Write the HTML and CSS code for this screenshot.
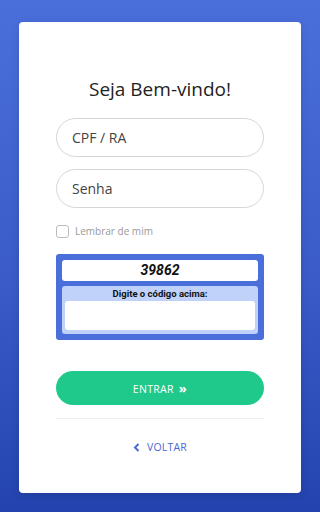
FILE: index.html
```html
<!DOCTYPE html>
<html lang="pt-BR">
<head>
    <meta charset="UTF-8">
    <meta name="viewport" content="width=device-width, initial-scale=1.0">
    <title>Login</title>
    <link rel="stylesheet" href="styles.css">
</head>
<body>
    <div class="card">
        <h1>Seja Bem-vindo!</h1>

        <form class="login">
            <input type="text" class="field" placeholder="CPF / RA">
            <input type="password" class="field" placeholder="Senha">

            <label class="remember">
                <span class="box"></span>
                Lembrar de mim
            </label>

            <div class="captcha">
                <div class="code">39862</div>
                <div class="answer">
                    <span>Digite o código acima:</span>
                    <input type="text">
                </div>
            </div>

            <button type="button" class="enter">ENTRAR <b>&raquo;</b></button>
        </form>

        <hr>

        <a class="back" href="#">
            <svg width="7" height="9" viewBox="0 0 7 9"><path d="M5.5 1 L2 4.5 L5.5 8" fill="none" stroke="#4a68d6" stroke-width="2"/></svg>
            VOLTAR
        </a>
    </div>
</body>
</html>
```

FILE: styles.css
```css
* {
    margin: 0;
    padding: 0;
    box-sizing: border-box;
}

body {
    font-family: "Open Sans", "Noto Sans", sans-serif;
    background: linear-gradient(180deg, #4a6fdb 0%, #3a5bc8 55%, #2443ae 100%);
    min-height: 512px;
    padding: 22px 19px 19px;
}

.card {
    background-color: #fff;
    border-radius: 4px;
    height: 471px;
    padding: 54px 37px 0;
    box-shadow: 0 2px 8px rgba(0, 0, 0, 0.12);
}

h1 {
    font-size: 19px;
    font-weight: 400;
    color: #222;
    text-align: center;
    margin-bottom: 16px;
}

.login {
    display: flex;
    flex-direction: column;
}

.field {
    height: 39px;
    border: 1px solid #d6d6d6;
    border-radius: 20px;
    padding: 0 15px;
    font-family: inherit;
    font-size: 14px;
    color: #333;
    margin-bottom: 12px;
    outline: none;
}

.field::placeholder {
    color: #444;
}

.remember {
    display: flex;
    align-items: center;
    gap: 6px;
    font-size: 10px;
    color: #999;
    margin: 4px 0 16px;
}

.remember .box {
    width: 13px;
    height: 13px;
    border: 1px solid #bbb;
    border-radius: 3px;
}

.captcha {
    background-color: #4a6fdb;
    border-radius: 3px;
    padding: 6px;
    font-family: Roboto, sans-serif;
}

.captcha .code {
    background-color: #fff;
    border-radius: 3px;
    height: 21px;
    line-height: 21px;
    text-align: center;
    font-size: 14px;
    font-weight: bold;
    font-style: italic;
    color: #111;
    margin-bottom: 5px;
}

.captcha .answer {
    background-color: #c0d1fa;
    border-radius: 3px;
    padding: 2px 3px 4px;
    text-align: center;
}

.captcha .answer span {
    display: block;
    font-size: 9.5px;
    font-weight: bold;
    color: #111;
    line-height: 11px;
    margin-bottom: 2px;
}

.captcha .answer input {
    width: 100%;
    height: 29px;
    border: none;
    border-radius: 3px;
    background: #fff;
}

.enter {
    margin-top: 31px;
    height: 34px;
    border: none;
    border-radius: 17px;
    background-color: #1ec98b;
    color: #fff;
    font-family: inherit;
    font-size: 10.5px;
    letter-spacing: 0.3px;
}

.enter b {
    font-size: 13px;
    margin-left: 2px;
}

hr {
    border: none;
    border-top: 1px solid #eee;
    margin-top: 13px;
}

.back {
    display: flex;
    justify-content: center;
    align-items: center;
    gap: 7px;
    margin-top: 21px;
    font-size: 10.5px;
    color: #4a68d6;
    text-decoration: none;
    letter-spacing: 0.2px;
}
```
